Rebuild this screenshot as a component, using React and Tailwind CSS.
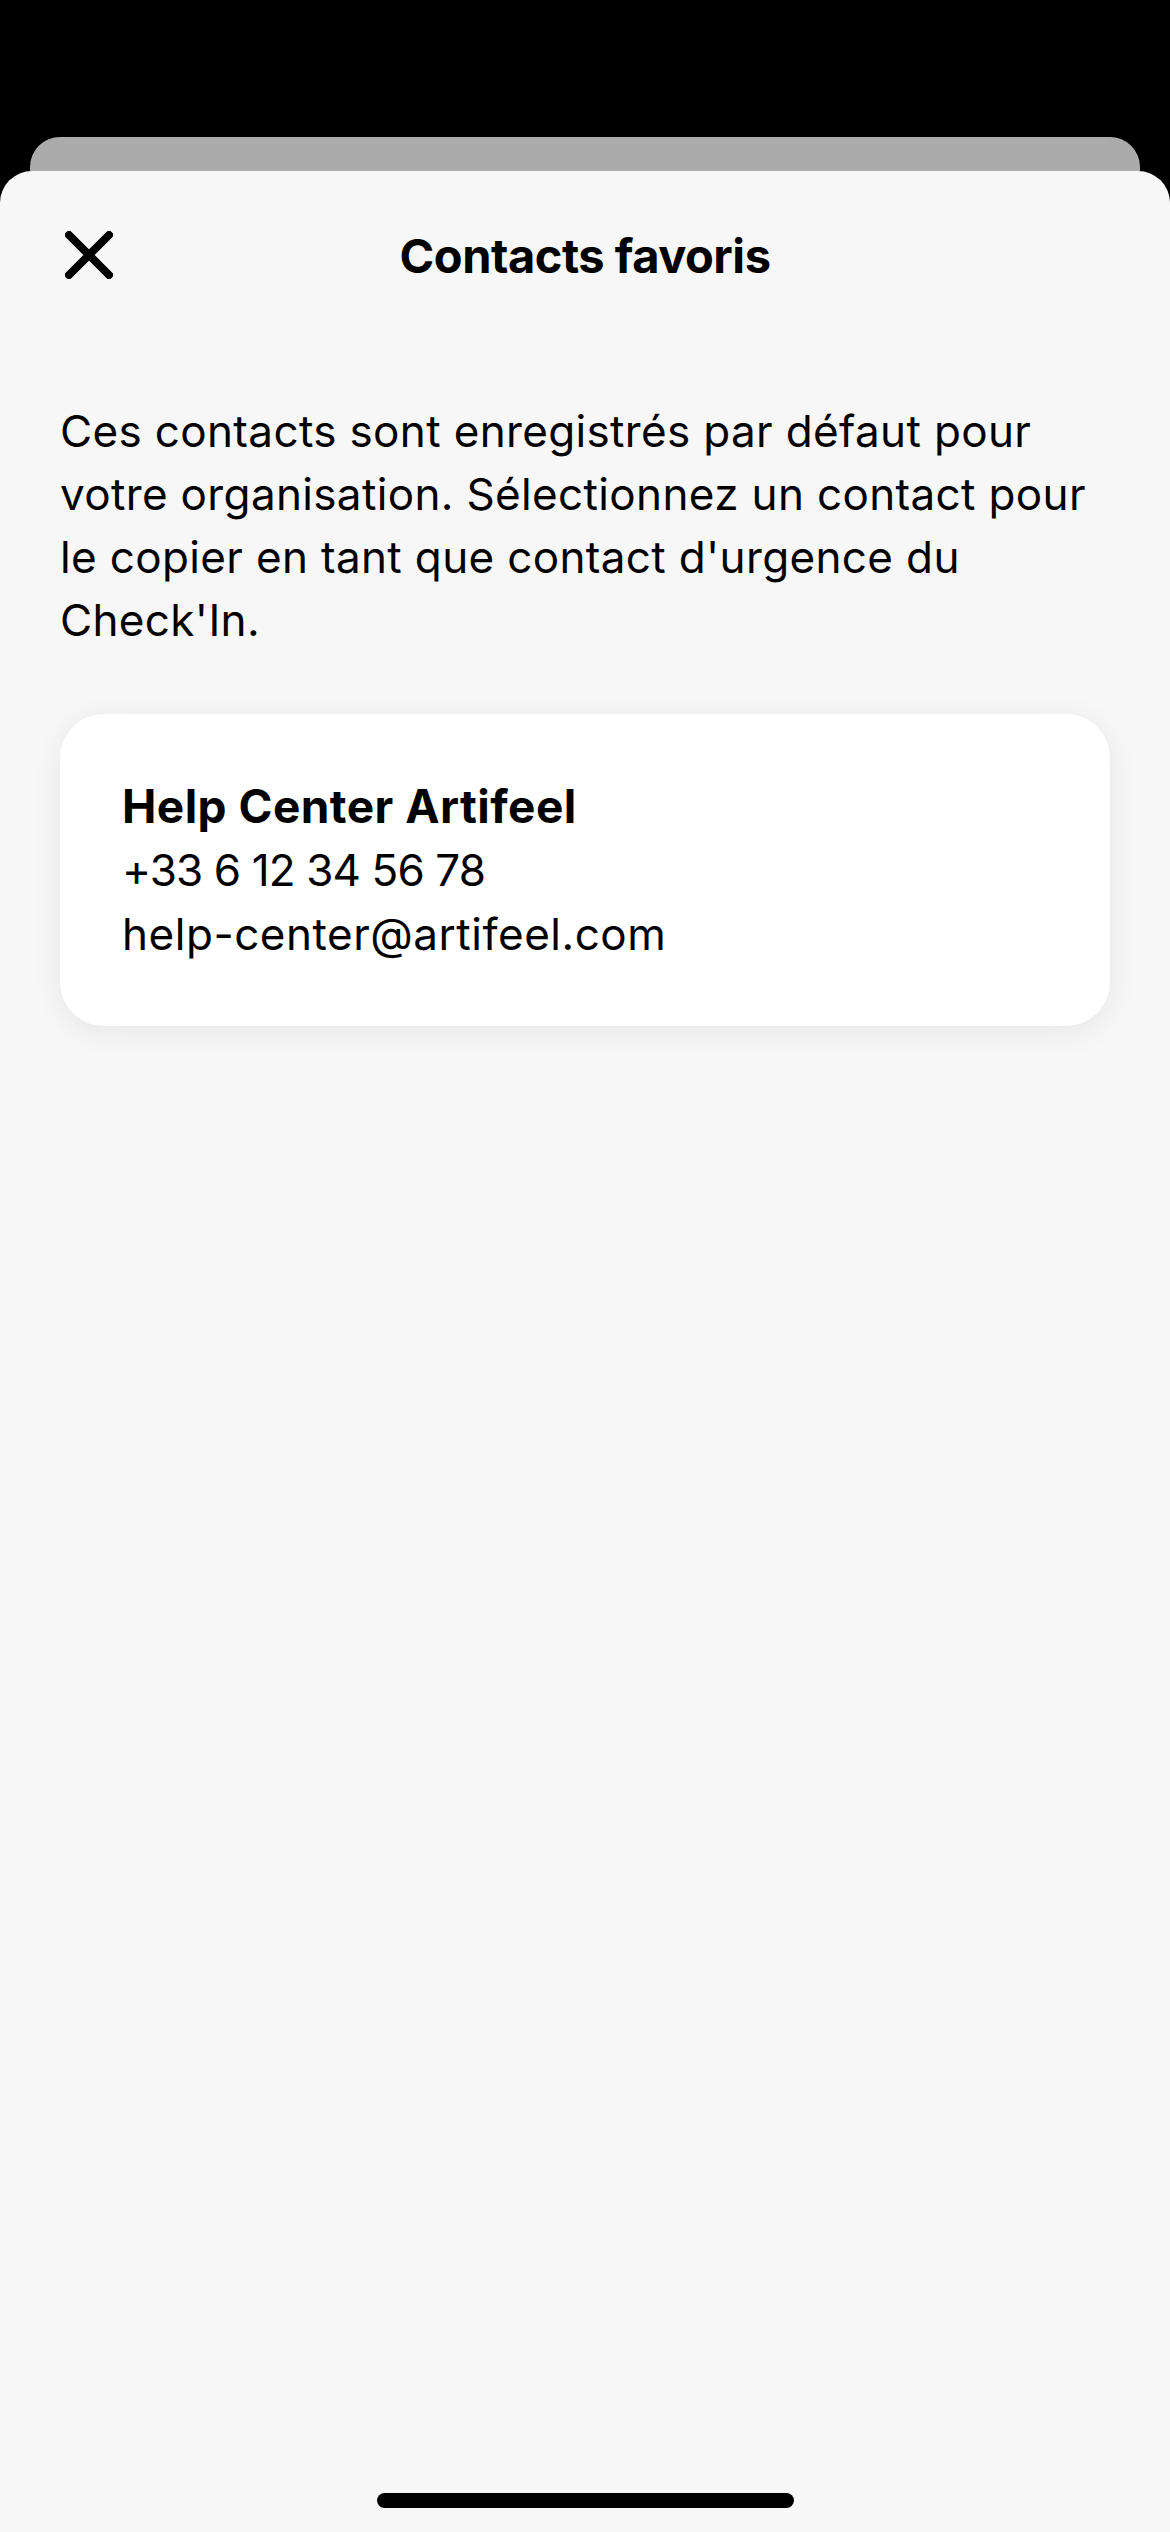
import React from 'react';

function CloseIcon() {
  return (
    <svg width="48" height="48" viewBox="0 0 48 48" fill="none" className="block">
      <path d="M4 4L44 44M44 4L4 44" stroke="#000" strokeWidth="8" strokeLinecap="round" />
    </svg>
  );
}

export default function App() {
  return (
    <div className="w-[1170px] h-[2532px] bg-black flex flex-col overflow-hidden font-['Inter',sans-serif] text-black">
      {/* status bar area */}
      <div className="h-[137px] shrink-0"></div>

      {/* stacked sheet behind */}
      <div className="mx-[30px] h-[34px] shrink-0 rounded-t-[30px] bg-[#ababab]"></div>

      {/* main sheet */}
      <div className="flex-1 flex flex-col bg-[#f7f7f7] rounded-t-[32px] px-[60px]">
        <div className="mt-[56px] h-[56px] grid grid-cols-[1fr_auto_1fr] items-center">
          <div className="pl-[5px]">
            <CloseIcon />
          </div>
          <h1 className="text-[47px] font-bold tracking-[-0.01em] leading-none">Contacts favoris</h1>
          <div></div>
        </div>

        <p className="mt-[117px] text-[44px] leading-[63px] tracking-[0.008em]">
          Ces contacts sont enregistrés par défaut pour votre organisation. Sélectionnez un contact pour le copier en tant que contact d'urgence du Check'In.
        </p>

        <div className="mt-[62px] bg-white rounded-[44px] px-[62px] py-[60px] shadow-[0_6px_30px_rgba(0,0,0,0.07)]">
          <div className="text-[46px] leading-[64px] font-bold tracking-[0.01em]">Help Center Artifeel</div>
          <div className="text-[44px] leading-[64px] tracking-[-0.02em]">+33 6 12 34 56 78</div>
          <div className="text-[44px] leading-[64px] tracking-[0.012em]">help-center@artifeel.com</div>
        </div>

        <div className="mt-auto mb-[24px] self-center w-[417px] h-[15px] rounded-full bg-black"></div>
      </div>
    </div>
  );
}
